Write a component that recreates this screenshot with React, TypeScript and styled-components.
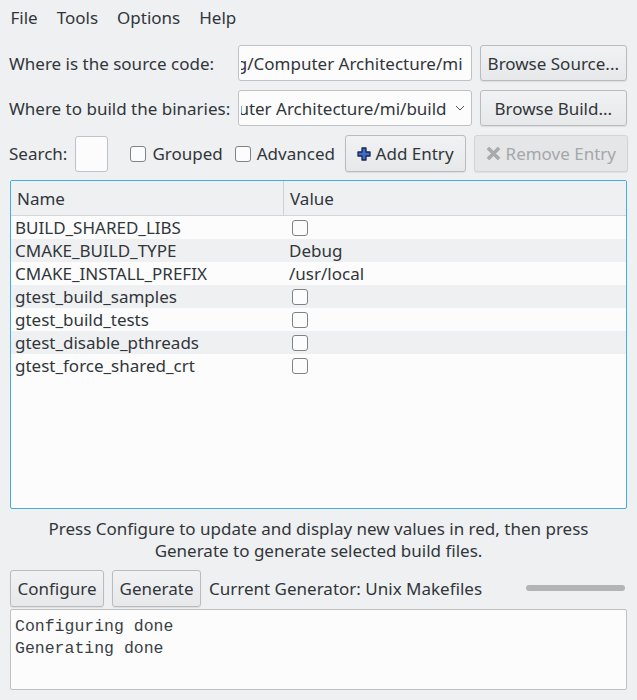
import React from "react";
import styled, { createGlobalStyle } from "styled-components";

const Global = createGlobalStyle`
  html, body { margin: 0; padding: 0; background: #eff0f1; }
  body { font-family: "Noto Sans", "Open Sans", sans-serif; font-size: 17px; color: #31363b; }
  * { box-sizing: border-box; }
`;

const Window = styled.div`
  width: 637px;
  height: 700px;
  background: #eff0f1;
  display: flex;
  flex-direction: column;
  overflow: hidden;
`;

const MenuBar = styled.div`
  display: flex;
  height: 36px;
  align-items: center;
  padding-left: 1px;
`;

const MenuItem = styled.span`
  padding: 0 9.5px;
  line-height: 36px;
`;

const Content = styled.div`
  display: flex;
  flex-direction: column;
  padding: 9px 10px 0 10px;
`;

const PathGrid = styled.div`
  display: grid;
  grid-template-columns: auto 1fr auto;
  column-gap: 8px;
  row-gap: 9px;
  align-items: center;
`;

const Label = styled.span`
  white-space: nowrap;
  margin-left: -1px;
`;

const Field = styled.div`
  height: 36px;
  background: #fcfcfc;
  border: 1px solid #bfc1c3;
  border-radius: 3px;
  display: flex;
  align-items: center;
  padding: 0 8px 0 2px;
  overflow: hidden;
  white-space: nowrap;
`;

const FieldText = styled.span`
  flex: 1;
  overflow: hidden;
  display: flex;
  justify-content: flex-end;
`;

const Chevron = styled.svg`
  flex: none;
  margin-left: 8px;
  margin-right: -2px;
`;

const Button = styled.button<{ $disabled?: boolean; $pad?: number }>`
  height: 37px;
  font-family: inherit;
  font-size: 17px;
  color: ${(p) => (p.$disabled ? "#a5a7a9" : "#31363b")};
  background: ${(p) =>
    p.$disabled ? "#e4e6e8" : "linear-gradient(#f1f2f3, #e7e8e9)"};
  border: 1px solid ${(p) => (p.$disabled ? "#d2d4d6" : "#b9bbbd")};
  border-radius: 3px;
  box-shadow: 0 1px 1px rgba(0, 0, 0, 0.08);
  padding: 0 ${(p) => p.$pad ?? 7}px;
  display: flex;
  align-items: center;
  justify-content: center;
  gap: 5px;
  white-space: nowrap;
`;

const WideButton = styled(Button)`
  height: 36px;
`;

const SearchRow = styled.div`
  display: flex;
  align-items: center;
  margin-top: 9px;
  height: 37px;
`;

const SearchInput = styled.div`
  width: 33px;
  height: 36px;
  margin-left: 8px;
  background: #fcfcfc;
  border: 1px solid #bfc1c3;
  border-radius: 3px;
`;

const CheckLabel = styled.label<{ $ml: number }>`
  display: flex;
  align-items: center;
  gap: 6px;
  margin-left: ${(p) => p.$ml}px;
`;

const Box = styled.span`
  width: 16px;
  height: 16px;
  border: 1px solid #7f8386;
  border-radius: 3px;
  background: #fcfcfc;
  display: inline-block;
`;

const Spacer = styled.div`
  flex: 1;
`;

const ButtonGap = styled.div`
  display: flex;
  gap: 8px;
  margin-right: -1px;
`;

const Table = styled.div`
  margin-top: 8px;
  height: 329px;
  border: 1px solid #3daee9;
  border-radius: 2px;
  background: #fcfcfc;
  display: flex;
  flex-direction: column;
  overflow: hidden;
`;

const Header = styled.div`
  display: grid;
  grid-template-columns: 273px 1fr;
  height: 35px;
  background: #eff0f1;
  border-bottom: 1px solid #d3d5d7;
`;

const HeaderCell = styled.div<{ $divider?: boolean }>`
  display: flex;
  align-items: center;
  padding-left: 6px;
  padding-top: 1px;
  border-right: ${(p) => (p.$divider ? "1px solid #cfd1d3" : "none")};
`;

const Row = styled.div<{ $alt: boolean }>`
  display: grid;
  grid-template-columns: 273px 1fr;
  height: 23px;
  align-items: center;
  background: ${(p) => (p.$alt ? "#eff0f1" : "#fcfcfc")};
`;

const NameCell = styled.div`
  padding-left: 4px;
  white-space: nowrap;
`;

const ValueCell = styled.div`
  padding-left: 5px;
  display: flex;
  align-items: center;
`;

const ValueBox = styled(Box)`
  margin-left: 3px;
`;

const Hint = styled.div`
  text-align: center;
  line-height: 22px;
  margin-top: 9px;
`;

const ActionRow = styled.div`
  display: flex;
  align-items: center;
  gap: 8px;
  margin-top: 7px;
  height: 38px;
`;

const GenLabel = styled.span`
  white-space: nowrap;
`;

const Progress = styled.div`
  margin-left: auto;
  margin-right: 2px;
  width: 99px;
  height: 6px;
  border-radius: 3px;
  background: #b3b4b5;
`;

const Output = styled.div`
  margin-top: 2px;
  height: 81px;
  background: #fcfcfc;
  border: 1px solid #bfc1c3;
  border-radius: 2px;
  padding: 6px 4px;
  font-family: "Liberation Mono", "DejaVu Sans Mono", monospace;
  font-size: 16.5px;
  line-height: 22px;
  color: #3a3f44;
  white-space: pre;
`;

const PlusIcon = () => (
  <svg width="14" height="14" viewBox="0 0 14 14">
    <path
      d="M5 1 H9 V5 H13 V9 H9 V13 H5 V9 H1 V5 H5 Z"
      fill="#3b6fc6"
      stroke="#1b2450"
      strokeWidth="1.3"
      strokeLinejoin="round"
    />
  </svg>
);

const XIcon = () => (
  <svg width="15" height="15" viewBox="0 0 14 14">
    <path
      d="M3 1 L7 5 L11 1 L13 3 L9 7 L13 11 L11 13 L7 9 L3 13 L1 11 L5 7 L1 3 Z"
      fill="#a8aaac"
      stroke="#a8aaac"
      strokeWidth="0.8"
      strokeLinejoin="round"
    />
  </svg>
);

const entries: { name: string; value: string | null }[] = [
  { name: "BUILD_SHARED_LIBS", value: null },
  { name: "CMAKE_BUILD_TYPE", value: "Debug" },
  { name: "CMAKE_INSTALL_PREFIX", value: "/usr/local" },
  { name: "gtest_build_samples", value: null },
  { name: "gtest_build_tests", value: null },
  { name: "gtest_disable_pthreads", value: null },
  { name: "gtest_force_shared_crt", value: null },
];

export default function App() {
  return (
    <Window>
      <Global />
      <MenuBar>
        <MenuItem>File</MenuItem>
        <MenuItem>Tools</MenuItem>
        <MenuItem>Options</MenuItem>
        <MenuItem>Help</MenuItem>
      </MenuBar>
      <Content>
        <PathGrid>
          <Label>Where is the source code:</Label>
          <Field>
            <FieldText>
              <span>ng/Computer Architecture/mi</span>
            </FieldText>
          </Field>
          <WideButton>Browse Source...</WideButton>
          <Label>Where to build the binaries:</Label>
          <Field>
            <FieldText>
              <span>uter Architecture/mi/build</span>
            </FieldText>
            <Chevron width="10" height="6" viewBox="0 0 10 6">
              <path d="M1 1 L5 5 L9 1" fill="none" stroke="#4d5257" strokeWidth="1" />
            </Chevron>
          </Field>
          <WideButton>Browse Build...</WideButton>
        </PathGrid>
        <SearchRow>
          <Label>Search:</Label>
          <SearchInput />
          <CheckLabel $ml={22}>
            <Box />
            Grouped
          </CheckLabel>
          <CheckLabel $ml={12}>
            <Box />
            Advanced
          </CheckLabel>
          <Spacer />
          <ButtonGap>
            <Button $pad={11}>
              <PlusIcon />
              Add Entry
            </Button>
            <Button $disabled $pad={11}>
              <XIcon />
              Remove Entry
            </Button>
          </ButtonGap>
        </SearchRow>
        <Table>
          <Header>
            <HeaderCell $divider>Name</HeaderCell>
            <HeaderCell>Value</HeaderCell>
          </Header>
          {entries.map((e, i) => (
            <Row key={e.name} $alt={i % 2 === 1}>
              <NameCell>{e.name}</NameCell>
              <ValueCell>{e.value === null ? <ValueBox /> : e.value}</ValueCell>
            </Row>
          ))}
        </Table>
        <Hint>
          Press Configure to update and display new values in red, then press
          <br />
          Generate to generate selected build files.
        </Hint>
        <ActionRow>
          <Button $pad={6.5}>Configure</Button>
          <Button $pad={6.5}>Generate</Button>
          <GenLabel>Current Generator: Unix Makefiles</GenLabel>
          <Progress />
        </ActionRow>
        <Output>{"Configuring done\nGenerating done"}</Output>
      </Content>
    </Window>
  );
}
